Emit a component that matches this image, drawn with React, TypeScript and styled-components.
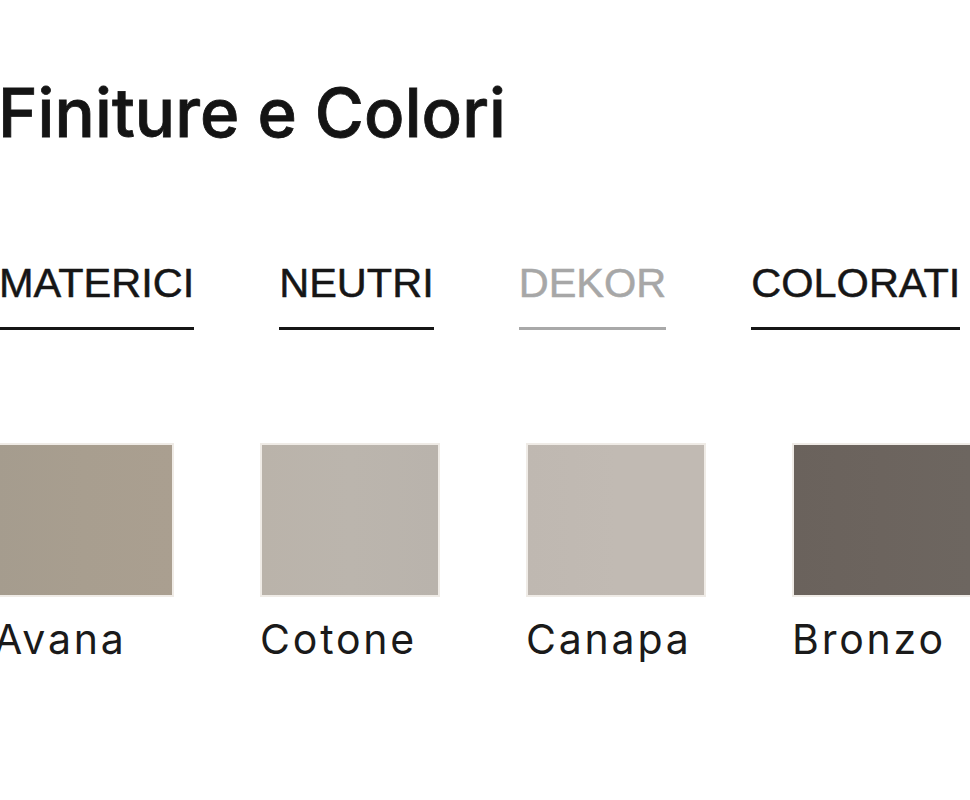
import React from "react";
import styled, { createGlobalStyle } from "styled-components";

const Global = createGlobalStyle`
  html, body { margin: 0; padding: 0; background: #ffffff; overflow: hidden; }
  body { width: 970px; height: 800px; }
`;

const Page = styled.div`
  display: flex;
  flex-direction: column;
  width: 970px;
  height: 800px;
  overflow: hidden;
  background: #fff;
`;

const Title = styled.h1`
  margin: 79px 0 0 -2px;
  font-family: Inter, "Noto Sans", sans-serif;
  font-weight: 500;
  font-size: 67px;
  line-height: 67px;
  color: #141414;
  letter-spacing: 0.1px;
  white-space: nowrap;
  -webkit-text-stroke: 0.8px #141414;
`;

const Tabs = styled.div`
  display: flex;
  gap: 85px;
  margin: 115px 0 0 -1px;
`;

const Tab = styled.div<{ $muted?: boolean }>`
  font-family: "Liberation Sans", Arial, sans-serif;
  font-size: 41.5px;
  line-height: 44px;
  color: ${(p) => (p.$muted ? "#a7a7a7" : "#161616")};
  white-space: nowrap;
  padding-bottom: 22px;
  border-bottom: 3px solid ${(p) => (p.$muted ? "#a9a9a9" : "#161616")};
  -webkit-text-stroke: 0.5px ${(p) => (p.$muted ? "#a7a7a7" : "#161616")};
`;

const Swatches = styled.div`
  display: flex;
  gap: 86px;
  margin: 113px 0 0 -6px;
`;

const Item = styled.div`
  display: flex;
  flex-direction: column;
  flex: 0 0 180px;
  width: 180px;
`;

const Chip = styled.div<{ $bg: string }>`
  box-sizing: border-box;
  width: 180px;
  height: 154px;
  border: 2px solid #efebe6;
  background: ${(p) => p.$bg};
`;

const Label = styled.div`
  margin-top: 18px;
  font-family: Inter, "Noto Sans", sans-serif;
  font-size: 41px;
  line-height: 48px;
  font-weight: 400;
  letter-spacing: 2.8px;
  color: #1a1a1a;
  white-space: nowrap;
`;

const tabs = [
  { name: "MATERICI" },
  { name: "NEUTRI" },
  { name: "DEKOR", muted: true },
  { name: "COLORATI" },
];

const colors = [
  { name: "Avana", bg: "linear-gradient(90deg, #a59c8e 0%, #a89e8f 50%, #aa9f90 100%)" },
  { name: "Cotone", bg: "linear-gradient(90deg, #bab3aa 0%, #bbb5ad 50%, #b9b3ac 100%)" },
  { name: "Canapa", bg: "linear-gradient(90deg, #bfb8b1 0%, #c1bab3 50%, #c1bab3 100%)" },
  { name: "Bronzo", bg: "linear-gradient(90deg, #6a625c 0%, #6c645e 50%, #6d6660 100%)" },
];

export default function App() {
  return (
    <Page>
      <Global />
      <Title>Finiture e Colori</Title>
      <Tabs>
        {tabs.map((t) => (
          <Tab key={t.name} $muted={t.muted}>
            {t.name}
          </Tab>
        ))}
      </Tabs>
      <Swatches>
        {colors.map((c) => (
          <Item key={c.name}>
            <Chip $bg={c.bg} />
            <Label>{c.name}</Label>
          </Item>
        ))}
      </Swatches>
    </Page>
  );
}
